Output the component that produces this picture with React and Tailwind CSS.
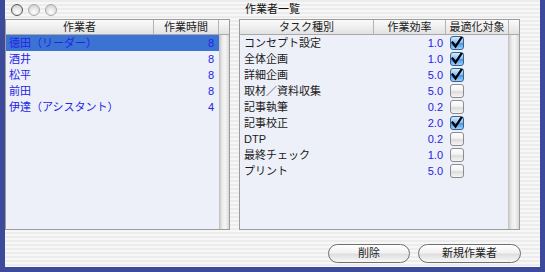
import React from "react";

const FONT = { fontFamily: '"Liberation Sans", "Noto Sans CJK JP", sans-serif' };

const workers = [
  ["徳田（リーダー）", "8", true],
  ["酒井", "8"],
  ["松平", "8"],
  ["前田", "8"],
  ["伊達（アシスタント）", "4"],
];

const tasks = [
  ["コンセプト設定", "1.0", true],
  ["全体企画", "1.0", true],
  ["詳細企画", "5.0", true],
  ["取材／資料収集", "5.0", false],
  ["記事執筆", "0.2", false],
  ["記事校正", "2.0", true],
  ["DTP", "0.2", false],
  ["最終チェック", "1.0", false],
  ["プリント", "5.0", false],
];

const stripes =
  "bg-[image:repeating-linear-gradient(180deg,#ececec_0px,#ececec_2px,#f7f7f7_2px,#f7f7f7_4px)]";

function Check({ on }) {
  if (on) {
    return (
      <div className="w-[14px] h-[14px] rounded-[3px] border border-[#3b5f92] bg-[linear-gradient(180deg,#d6ecfd_0%,#8cc2f3_45%,#4a97e6_55%,#9fd0fb_100%)] flex items-center justify-center">
        <svg width="12" height="12" viewBox="0 0 12 12">
          <path d="M1.5 5.5 L4.5 9.5 L10.5 0.5" fill="none" stroke="#000" strokeWidth="2.2" strokeLinecap="square" />
        </svg>
      </div>
    );
  }
  return (
    <div className="w-[14px] h-[14px] rounded-[3px] border border-[#8c8c8c] bg-[linear-gradient(180deg,#ffffff_0%,#f0f0f0_50%,#dcdcdc_55%,#f6f6f6_100%)]" />
  );
}

function HeaderCell({ children, className = "" }) {
  return (
    <div className={"h-full flex items-center justify-center border-r border-[#b4b4b4] text-[#222] " + className}>
      {children}
    </div>
  );
}

function ScrollTrack() {
  return (
    <div className="w-[11px] h-full border-l border-[#c4c4c4] bg-[linear-gradient(90deg,#cfcfcf_0%,#eeeeee_30%,#f4f4f4_60%,#d8d8d8_100%)]" />
  );
}

function Light({ dark }) {
  return (
    <div
      className={
        "w-[12px] h-[12px] rounded-full border bg-[radial-gradient(circle_at_50%_70%,#ffffff_0%,#e4e4e4_50%,#c8c8c8_100%)] " +
        (dark ? "border-[#555]" : "border-[#a9a9a9]")
      }
    />
  );
}

export default function App() {
  return (
    <div className="w-[545px] h-[272px] bg-[#3d4a9c] overflow-hidden" style={FONT}>
      <div className={"ml-[5px] w-[535px] h-[267px] flex flex-col " + stripes}>
        {/* Title bar */}
        <div className="h-[19px] relative flex items-center">
          <div className="flex items-center gap-[5px] pl-[6px] pt-[1px]">
            <Light dark />
            <Light />
            <Light />
          </div>
          <div className="absolute left-0 right-0 top-[1px] text-center text-[11px] leading-[16px] text-[#111]">
            作業者一覧
          </div>
        </div>

        {/* Panels */}
        <div className="h-[211px] flex">
          {/* Left panel */}
          <div className="w-[225px] h-full border border-[#9c9c9c] flex flex-col bg-[#edf0f8]">
            <div className="h-[15px] flex border-b border-[#a8a8a8] bg-[linear-gradient(180deg,#fbfbfb_0%,#efefef_50%,#e2e2e2_100%)] text-[11px] leading-none">
              <HeaderCell className="w-[148px]">作業者</HeaderCell>
              <HeaderCell className="w-[65px]">作業時間</HeaderCell>
              <div className="flex-1 h-full" />
            </div>
            <div className="flex-1 flex">
              <div className="w-[213px]">
                {workers.map(([n, h, sel]) => (
                  <div
                    key={n}
                    className={
                      "h-[16px] flex items-center text-[11px] leading-none text-[#2323e8] " +
                      (sel ? "bg-[#3b73d2]" : "")
                    }
                  >
                    <div className="w-[148px] pl-[3px] whitespace-nowrap">{n}</div>
                    <div className="w-[65px] text-right pr-[5px]">{h}</div>
                  </div>
                ))}
              </div>
              <ScrollTrack />
            </div>
          </div>

          {/* Splitter */}
          <div className="w-[9px] h-full" />

          {/* Right panel */}
          <div className="w-[281px] h-full border border-[#9c9c9c] flex flex-col bg-[#edf0f8]">
            <div className="h-[15px] flex border-b border-[#a8a8a8] bg-[linear-gradient(180deg,#fbfbfb_0%,#efefef_50%,#e2e2e2_100%)] text-[11px] leading-none">
              <HeaderCell className="w-[134px]">タスク種別</HeaderCell>
              <HeaderCell className="w-[72px]">作業効率</HeaderCell>
              <HeaderCell className="w-[63px]">最適化対象</HeaderCell>
              <div className="flex-1 h-full" />
            </div>
            <div className="flex-1 flex">
              <div className="w-[268px]">
                {tasks.map(([n, v, c]) => (
                  <div key={n} className="h-[16px] flex items-center text-[11px] leading-none">
                    <div className="w-[134px] pl-[4px] text-[#1a1a1a] whitespace-nowrap">{n}</div>
                    <div className="w-[72px] text-right pr-[3px] text-[#2323e8]">{v}</div>
                    <div className="w-[62px] pl-[4px] flex items-center">
                      <Check on={c} />
                    </div>
                  </div>
                ))}
              </div>
              <ScrollTrack />
            </div>
          </div>
        </div>

        {/* Buttons */}
        <div className="flex-1 flex justify-end items-start pt-[14px] pr-[19px] gap-[8px]">
          <button className="w-[82px] h-[19px] rounded-full border border-[#6f6f6f] bg-[linear-gradient(180deg,#ffffff_0%,#f2f2f2_45%,#dedede_55%,#f8f8f8_100%)] text-[11px] leading-none text-[#222] flex items-center justify-center">
            削除
          </button>
          <button className="w-[103px] h-[19px] rounded-full border border-[#6f6f6f] bg-[linear-gradient(180deg,#ffffff_0%,#f2f2f2_45%,#dedede_55%,#f8f8f8_100%)] text-[11px] leading-none text-[#222] flex items-center justify-center">
            新規作業者
          </button>
        </div>
      </div>
    </div>
  );
}
